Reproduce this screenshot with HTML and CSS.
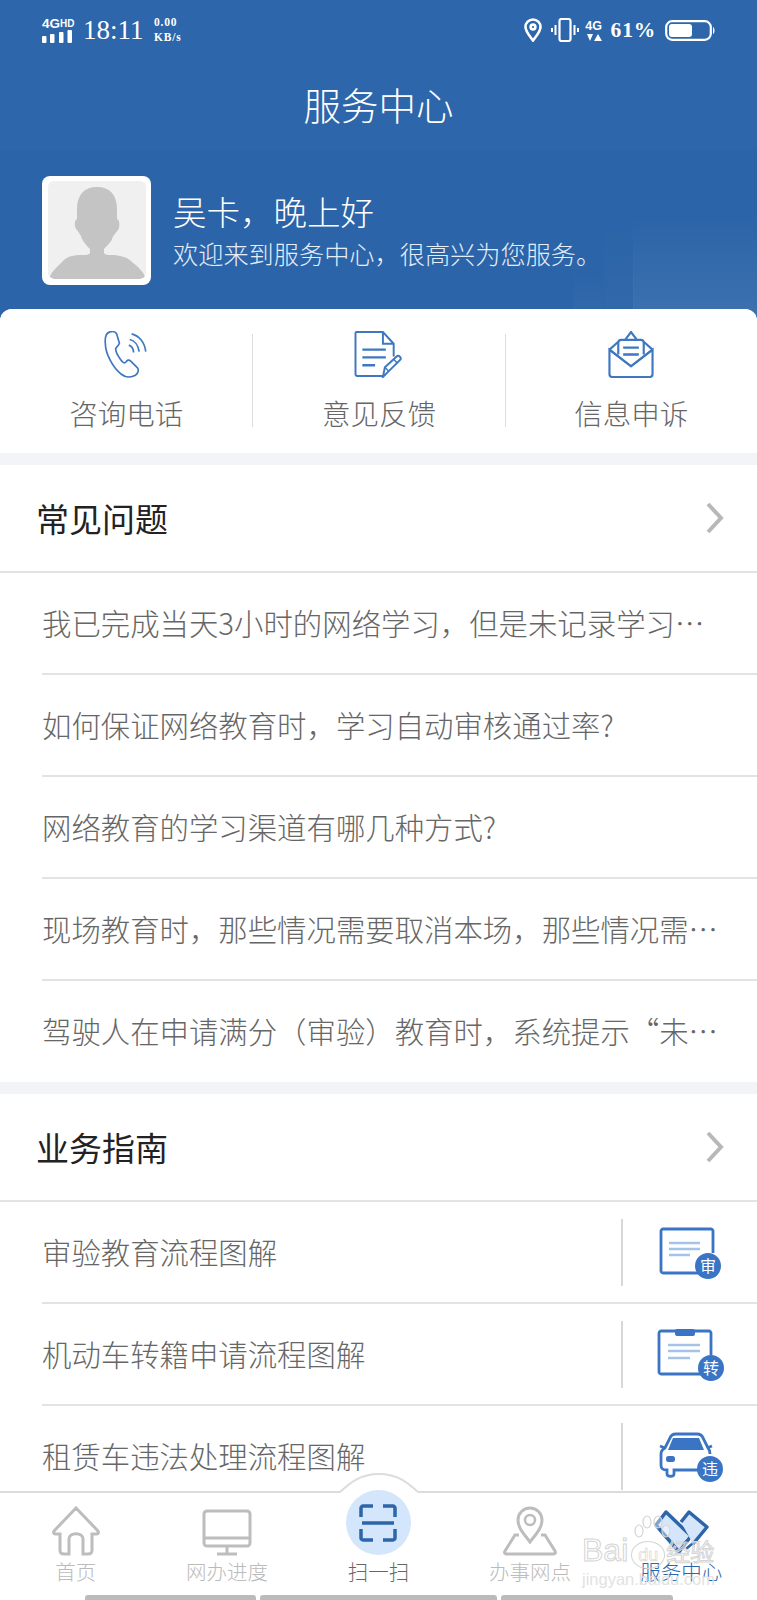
FILE: index.html
```html
<!DOCTYPE html>
<html lang="zh-CN">
<head>
    <meta charset="UTF-8">
    <meta name="viewport" content="width=device-width, initial-scale=1.0">
    <title>服务中心</title>
    <link rel="stylesheet" href="styles.css">
</head>
<body>
<div class="page">
    <header class="header">
        <div class="status">
            <div class="status-group">
                <div class="signal">
                    <div class="signal-text">4G<span>HD</span></div>
                    <svg class="signal-bars" width="30" height="13" viewBox="0 0 30 13">
                        <rect x="0" y="6" width="4.500" height="7" rx="1"/>
                        <rect x="8" y="4" width="4.500" height="9" rx="1"/>
                        <rect x="17" y="2" width="4.500" height="11" rx="1"/>
                        <rect x="25.500" y="0" width="4.500" height="13" rx="1"/>
                    </svg>
                </div>
                <div class="time">18:11</div>
                <div class="speed">0.00<br>KB/s</div>
            </div>
            <div class="status-group status-right">
                <svg width="18" height="24" viewBox="0 0 18 24" fill="none" stroke="#fff" stroke-width="2.600">
                    <path d="M9 22.500C5 17 1.500 13.500 1.500 9A7.500 7.500 0 0 1 16.500 9C16.500 13.500 13 17 9 22.500Z"/>
                    <circle cx="9" cy="9" r="2.400"/>
                </svg>
                <svg class="vibrate" width="28" height="24" viewBox="0 0 28 24" fill="none" stroke="#fff" stroke-width="2">
                    <rect x="8.500" y="1" width="11" height="22" rx="2" stroke-width="2.200"/>
                    <path d="M4.500 7V17M1 10V14M23.500 7V17M27 10V14"/>
                </svg>
                <div class="net">4G
                    <svg width="16" height="7" viewBox="0 0 16 7" fill="#fff">
                        <path d="M1 0H7L4 7ZM12 0L16 7H8Z"/>
                    </svg>
                </div>
                <div class="battery-pct">61%</div>
                <svg class="battery" width="51" height="21" viewBox="0 0 51 21">
                    <rect x="1.200" y="1.200" width="44.600" height="18.600" rx="6" fill="none" stroke="#fff" stroke-width="2.200"/>
                    <rect x="4" y="4" width="23" height="13" rx="3" fill="#fff"/>
                    <path d="M48 7C50 8 50 13 48 14Z" fill="#fff"/>
                </svg>
            </div>
        </div>
        <h1 class="title">服务中心</h1>
        <div class="profile">
            <div class="avatar">
                <svg width="98" height="98" viewBox="0 0 98 98" fill="#c4c4c4">
                    <path d="M49 6C36 6 29 14 29 28V38C26 39 26 46 29 49C31 52 33 54 34 58C36 62 40 66 42 68V72C41 74 38 74 35 74C25 74 19 75 14 81C9 86 3 91 2 96L6 98H92L97 96C95 90 90 86 84 81C79 76 72 74 63 74C60 74 57 74 56 72V68C59 65 63 61 64 58C65 54 68 52 70 49C72 46 72 39 69 38V28C69 14 62 6 49 6Z"/>
                </svg>
            </div>
            <div class="profile-text">
                <div class="greeting">吴卡，晚上好</div>
                <div class="welcome">欢迎来到服务中心，很高兴为您服务。</div>
            </div>
        </div>
    </header>

    <main class="content">
        <section class="tools">
            <div class="tool">
                <svg width="46" height="50" viewBox="0 0 46 50" fill="none" stroke="#3f78c0" stroke-width="1.800">
                    <path d="M6 1C2 2 .5 7 1 13C1 24 9 39 18 46C22 49 28 50 33 47C36 45 37 41 35 39L28 32C26 30 24 31 23 33C21 35 19 33 17 30C14 26 12 22 12 19C13 16 15 16 16 13L13 3C12 1 9 0 6 1Z"/>
                    <path d="M26 15C29 16 31 19 31 23M27 9C32 10 36 15 37 22M29 3C37 5 43 12 44 22"/>
                </svg>
                <div class="tool-label">咨询电话</div>
            </div>
            <div class="tool">
                <svg width="50" height="48" viewBox="0 0 50 48" fill="none" stroke="#3f78c0" stroke-width="2">
                    <path d="M2 1H29L40 13V26M30 46H3C2 46 1 45 1 44V2C1 1.500 1.500 1 2 1M29 1V13H40"/>
                    <path d="M8 19H32M8 27H32M8 35H21" stroke-width="2.400"/>
                    <path d="M29 47L31 37L43 26C45 24 48 27 47 29L35 41Z" fill="#fff"/>
                    <path d="M40 29L44 33M31 37L35 41" stroke-width="1.500"/>
                </svg>
                <div class="tool-label">意见反馈</div>
            </div>
            <div class="tool">
                <svg width="46" height="48" viewBox="0 0 46 48" fill="none" stroke="#3f78c0" stroke-width="2.200">
                    <path d="M1 19V44C1 46 2 47 4 47H42C44 47 45 46 45 44V19L23 36Z"/>
                    <path d="M1 19L10 11M45 19L36 11M17 9L23 1L29 9"/>
                    <path d="M10 24V12C10 10 11 9 13 9H33C35 9 36 10 36 12V24"/>
                    <path d="M1 19L23 36L45 19"/>
                    <path d="M15 17H31M15 24H31" stroke-width="2.400"/>
                </svg>
                <div class="tool-label">信息申诉</div>
            </div>
        </section>

        <section class="section">
            <div class="section-head">
                <h2>常见问题</h2>
                <svg class="chevron" width="20" height="32" viewBox="0 0 20 32"><path d="M3 2L16 16L3 30"/></svg>
            </div>
            <div class="row">我已完成当天3小时的网络学习，但是未记录学习…</div>
            <div class="row">如何保证网络教育时，学习自动审核通过率?</div>
            <div class="row">网络教育的学习渠道有哪几种方式?</div>
            <div class="row">现场教育时，那些情况需要取消本场，那些情况需…</div>
            <div class="row">驾驶人在申请满分（审验）教育时，系统提示“未…</div>
        </section>

        <section class="section">
            <div class="section-head">
                <h2>业务指南</h2>
                <svg class="chevron" width="20" height="32" viewBox="0 0 20 32"><path d="M3 2L16 16L3 30"/></svg>
            </div>
            <div class="row guide">
                <span class="guide-text">审验教育流程图解</span>
                <div class="guide-icon">
                    <svg width="70" height="60" viewBox="0 0 70 60">
                        <path d="M44 50H8C7 50 6 49 6 48V8C6 7 7 6 8 6H56C57 6 58 7 58 8V30" fill="none" stroke="#3a74c4" stroke-width="2.800"/>
                        <path d="M14 20H45M14 26H45M14 32H35" stroke="#a5c2e8" stroke-width="2.400"/>
                        <circle cx="53" cy="43" r="13" fill="#3a74c4"/>
                        <text class="badge" x="53" y="48.500">审</text>
                    </svg>
                </div>
            </div>
            <div class="row guide">
                <span class="guide-text">机动车转籍申请流程图解</span>
                <div class="guide-icon">
                    <svg width="70" height="60" viewBox="0 0 70 60">
                        <path d="M46 49H6C5 49 4 48 4 47V8C4 7 5 6 6 6H54C55 6 56 7 56 8V30" fill="none" stroke="#3a74c4" stroke-width="2.800"/>
                        <rect x="20" y="4" width="20" height="7" rx="2" fill="#3a74c4"/>
                        <path d="M13 20H45M13 26H45M13 33H35" stroke="#a5c2e8" stroke-width="2.400"/>
                        <circle cx="56" cy="43" r="13" fill="#3a74c4"/>
                        <text class="badge" x="56" y="48.500">转</text>
                    </svg>
                </div>
            </div>
            <div class="row guide">
                <span class="guide-text">租赁车违法处理流程图解</span>
                <div class="guide-icon">
                    <svg width="70" height="60" viewBox="0 0 70 60">
                        <path d="M44 43H19V47C19 50 12 50 12 47V43C7 43 6 41 6 38V27C6 24 8 22 10 21L15 11C16 8 18 7 21 7H42C45 7 47 8 48 11L53 21C54 22 55 24 55 27" fill="none" stroke="#3a74c4" stroke-width="2.800"/>
                        <path d="M18 11H44L49 23H13Z" fill="#3a74c4"/>
                        <rect x="11" y="29" width="9" height="6" rx="2.500" fill="#3a74c4"/>
                        <path d="M10 21L5 19M52 21L57 19" stroke="#3a74c4" stroke-width="2.800"/>
                        <circle cx="55" cy="42" r="13" fill="#3a74c4"/>
                        <text class="badge" x="55" y="47.500">违</text>
                    </svg>
                </div>
            </div>
        </section>
    </main>

    <footer class="tabbar">
        <svg class="hump" width="78" height="22" viewBox="0 0 78 22">
            <path d="M0 19C10 10 20 1 39 1C58 1 68 10 78 19V22H0Z" fill="#fff"/>
            <path d="M0 19C10 10 20 1 39 1C58 1 68 10 78 19" fill="none" stroke="#dcdcdc" stroke-width="2"/>
        </svg>
        <nav class="tabs">
            <div class="tab">
                <div class="tab-icon">
                    <svg width="50" height="50" viewBox="0 0 50 50" fill="none" stroke="#bdbdbd" stroke-width="3">
                        <path d="M25 2L3 25C2 27 3 28 5 28H9V44C9 47 10 48 13 48H18V33C18 26 32 26 32 33V48H37C40 48 41 47 41 44V28H45C47 28 48 27 47 25Z"/>
                    </svg>
                </div>
                <div class="tab-label">首页</div>
            </div>
            <div class="tab">
                <div class="tab-icon">
                    <svg width="50" height="50" viewBox="0 0 50 50" fill="none" stroke="#bdbdbd" stroke-width="3">
                        <rect x="2" y="5" width="46" height="35" rx="3"/>
                        <path d="M2 32H48M25 40V47M15 48H35"/>
                    </svg>
                </div>
                <div class="tab-label">网办进度</div>
            </div>
            <div class="tab">
                <div class="scan">
                    <svg width="38" height="38" viewBox="0 0 38 38" fill="none" stroke="#2c65a9" stroke-width="3.500">
                        <path d="M14 2H4C3 2 2 3 2 4V13M24 2H34C35 2 36 3 36 4V13M2 25V34C2 35 3 36 4 36H14M36 25V34C36 35 35 36 34 36H24"/>
                        <path d="M3 19H35"/>
                    </svg>
                </div>
                <div class="tab-label tab-scan">扫一扫</div>
            </div>
            <div class="tab">
                <div class="tab-icon">
                    <svg width="54" height="50" viewBox="0 0 54 50" fill="none" stroke="#bdbdbd" stroke-width="3">
                        <path d="M27 36C21 28 15 22 15 14A12 12 0 0 1 39 14C39 22 33 28 27 36Z"/>
                        <circle cx="27" cy="14" r="5" stroke-width="2.500"/>
                        <path d="M16 29H12L2 45C1 47 2 48 4 48H50C52 48 53 47 52 45L42 29H38"/>
                    </svg>
                </div>
                <div class="tab-label">办事网点</div>
            </div>
            <div class="tab">
                <div class="tab-icon">
                    <svg width="56" height="52" viewBox="0 0 56 52" stroke="#2c65a9" stroke-width="3.500" stroke-linejoin="round">
                        <path d="M3 19L13 6L38 30L26 46Z" fill="#d6e6fa"/>
                        <path d="M28 16L36 6L54 21L40 38" fill="#d6e6fa"/>
                        <path d="M30 38L36 33M33 43L40 37" fill="none" stroke-width="2.500"/>
                    </svg>
                </div>
                <div class="tab-label tab-active">服务中心</div>
            </div>
        </nav>
        <div class="gesture">
            <span class="gesture-left"></span>
            <span class="gesture-mid"></span>
            <span class="gesture-right"></span>
        </div>
        <!-- 百度经验水印 -->
        <div class="watermark">
            <svg class="wm-paw" width="36" height="24" viewBox="0 0 36 24" fill="rgba(255,255,255,.4)" stroke="#d4d4d4" stroke-width="1.200">
                <ellipse cx="5" cy="16" rx="4" ry="6"/>
                <ellipse cx="13" cy="7" rx="4" ry="6"/>
                <ellipse cx="24" cy="7" rx="4" ry="6"/>
                <ellipse cx="32" cy="16" rx="4" ry="6"/>
            </svg>
            <div class="wm-logo">Bai<span class="wm-du">du</span><span class="wm-cn">经验</span></div>
            <div class="wm-url">jingyan.baidu.com</div>
        </div>
    </footer>
</div>
</body>
</html>
```

FILE: styles.css
```css
* {
    box-sizing: border-box;
}
body {
    margin: 0;
    font-family: "Noto Sans CJK SC", "Noto Sans", sans-serif;
    font-weight: 300;
    background: #fff;
}
.page {
    position: relative;
    width: 757px;
    height: 1600px;
    overflow: hidden;
}

/* 顶部 */
.header {
    height: 322px;
    padding-bottom: 13px;
    background:
        linear-gradient(to top, rgba(255, 255, 255, .09), rgba(255, 255, 255, 0) 70%) 633px 170px / 124px 152px no-repeat,
        linear-gradient(to top, rgba(255, 255, 255, .04), rgba(255, 255, 255, 0)) 573px 270px / 30px 52px no-repeat,
        linear-gradient(to top, rgba(255, 255, 255, .03), rgba(255, 255, 255, 0)) 604px 220px / 30px 102px no-repeat,
        linear-gradient(to bottom, #2d66ab 150px, #2b64a8 150px);
    color: #fff;
}
.status {
    display: flex;
    justify-content: space-between;
    align-items: center;
    height: 54px;
    padding: 6px 41px 0 42px;
}
.status-group {
    display: flex;
    align-items: center;
}
.signal {
    width: 31px;
    margin-right: 10px;
}
.signal-text {
    height: 11px;
    font: bold 13.500px/11px "Liberation Sans", sans-serif;
    white-space: nowrap;
}
.signal-text span {
    font-size: 10px;
    vertical-align: 1px;
}
.signal-bars {
    display: block;
    margin-top: 1px;
    fill: #fff;
}
.time {
    width: 71px;
    font: 27px/30px "Liberation Serif", serif;
}
.speed {
    font: bold 11.500px/15px "Liberation Serif", serif;
    letter-spacing: .8px;
}
.status-right svg {
    display: block;
}
.vibrate {
    margin-left: 9px;
}
.net {
    width: 18px;
    margin-left: 6px;
    font: bold 12.500px/12px "Liberation Sans", sans-serif;
    text-align: center;
}
.net svg {
    margin: 2px 0 0 1px;
}
.battery-pct {
    margin-left: 8px;
    font: bold 21.500px/26px "Liberation Serif", serif;
    letter-spacing: .8px;
}
.battery {
    margin-left: 9px;
}
.title {
    height: 100px;
    margin: 0;
    font-size: 37.500px;
    font-weight: 300;
    line-height: 100px;
    text-align: center;
}
.profile {
    display: flex;
    align-items: center;
    margin-top: 22px;
    padding-left: 42px;
}
.avatar {
    width: 109px;
    height: 109px;
    padding: 5px 6px;
    border-radius: 8px;
    background: #fff;
}
.avatar svg {
    display: block;
    border-radius: 6px;
    background: #f0f0f0;
}
.profile-text {
    margin-left: 22px;
    padding-top: 1px;
}
.greeting {
    font-size: 33.500px;
    line-height: 44px;
}
.welcome {
    font-size: 25.200px;
    line-height: 40px;
    color: #e4edf8;
}

/* 内容 */
.content {
    position: relative;
    margin-top: -13px;
    border-radius: 12px 12px 0 0;
    background: #f3f4f8;
}
.tools {
    display: grid;
    grid-template-columns: repeat(3, 1fr);
    height: 144px;
    padding: 25px 0 26px;
    border-radius: 12px 12px 0 0;
    background: #fff;
}
.tool {
    display: flex;
    flex-direction: column;
    align-items: center;
    height: 93px;
}
.tool + .tool {
    border-left: 1px solid #ddd;
}
.tool svg {
    display: block;
    height: 48px;
    margin-top: -3px;
}
.tool-label {
    margin-top: 21px;
    font-size: 28.500px;
    line-height: 28px;
    color: #666;
}
.section {
    margin-top: 12px;
    background: #fff;
}
.section-head {
    display: flex;
    justify-content: space-between;
    align-items: center;
    height: 108px;
    padding: 0 32px 0 36px;
    border-bottom: 2px solid #e3e3e3;
}
.section-head h2 {
    margin: 0;
    font-size: 33px;
    font-weight: 400;
    color: #222;
}
.chevron {
    fill: none;
    stroke: #b8b8b8;
    stroke-width: 4;
}
.row {
    height: 102px;
    margin-left: 42px;
    overflow: hidden;
    border-bottom: 2px solid #e3e3e3;
    font-size: 29.400px;
    line-height: 98px;
    color: #666;
    white-space: nowrap;
}
.row:last-child {
    height: 101px;
    border-bottom: 0;
}
.guide,
.guide:last-child {
    display: flex;
    justify-content: space-between;
    align-items: center;
    height: 102px;
    border-bottom: 2px solid #e3e3e3;
}
.guide-text {
    margin-top: -2px;
}
.guide-icon {
    display: flex;
    justify-content: center;
    align-items: center;
    width: 136px;
    height: 67px;
    border-left: 2px solid #d8d8d8;
}
.guide-icon svg {
    display: block;
    margin-top: 2px;
}
.badge {
    font-family: "Noto Sans CJK SC", sans-serif;
    font-size: 16px;
    font-weight: 400;
    fill: #fff;
    text-anchor: middle;
}

/* 底部导航 */
.tabbar {
    position: absolute;
    left: 0;
    bottom: 0;
    width: 100%;
    height: 109px;
    border-top: 2px solid #dcdcdc;
    background: #fff;
}
.hump {
    position: absolute;
    top: -20px;
    left: 340px;
}
.tabs {
    position: relative;
    display: grid;
    grid-template-columns: repeat(5, 1fr);
    padding-top: 13px;
}
.tab {
    display: flex;
    flex-direction: column;
    align-items: center;
}
.tab-icon {
    display: flex;
    justify-content: center;
    align-items: flex-start;
    height: 52px;
    margin-bottom: 1px;
}
.tab-icon svg {
    display: block;
}
.scan {
    display: flex;
    justify-content: center;
    align-items: center;
    width: 65px;
    height: 65px;
    margin-top: -16px;
    margin-bottom: 4px;
    border-radius: 50%;
    background: #d4e6fb;
}
.tab-label {
    font-size: 20.500px;
    line-height: 24px;
    color: #bbb;
}
.tab-scan {
    color: #666;
}
.tab-active {
    color: #2c65a9;
}
.gesture {
    display: flex;
    gap: 4px;
    margin: 12px 0 0 85px;
}
.gesture span {
    height: 5px;
    border-radius: 3px 3px 0 0;
    background: #bbb;
}
.gesture-left {
    width: 171px;
}
.gesture-mid {
    width: 237px;
}
.gesture-right {
    width: 172px;
}
.watermark {
    position: absolute;
    top: 40px;
    left: 582px;
    width: 145px;
    color: rgba(255, 255, 255, .4);
}
.wm-paw {
    position: absolute;
    top: -18px;
    left: 52px;
}
.wm-logo {
    font: 32px/34px "Liberation Sans", sans-serif;
    -webkit-text-stroke: 1px #d4d4d4;
    white-space: nowrap;
}
.wm-du {
    display: inline-block;
    margin: 0 1px 0 3px;
    padding: 0 6px;
    border: 1px solid #d4d4d4;
    border-radius: 50%;
    font-size: 18px;
    line-height: 26px;
    -webkit-text-stroke: .6px #d4d4d4;
}
.wm-cn {
    font-family: "Noto Sans CJK SC", sans-serif;
    font-size: 24px;
}
.wm-url {
    font: 16.500px/20px "Liberation Sans", sans-serif;
    color: #e2e2e2;
    white-space: nowrap;
}
```
